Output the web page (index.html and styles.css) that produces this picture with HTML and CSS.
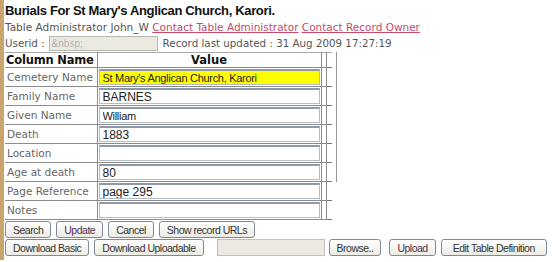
FILE: index.html
```html
<!DOCTYPE html>
<html lang="en">
<head>
    <meta charset="UTF-8">
    <title>Burials For St Mary's Anglican Church, Karori.</title>
    <link rel="stylesheet" href="styles.css">
</head>
<body>
    <h1>Burials For St Mary's Anglican Church, Karori.</h1>
    <div class="admin">Table Administrator John_W <a href="#">Contact Table Administrator</a> <a href="#">Contact Record Owner</a></div>
    <div class="userline">
        Userid : <input class="userid" type="text" placeholder="&amp;nbsp;">
        <span class="updated">Record last updated : 31 Aug 2009 17:27:19</span>
    </div>

    <div class="record">
        <table class="fields">
            <colgroup>
                <col class="c-name">
                <col class="c-value">
                <col class="c-gap">
                <col class="c-tail">
            </colgroup>
            <tr class="head">
                <th class="name">Column Name</th>
                <th class="value">Value</th>
                <td class="gap"></td>
                <td class="tail"></td>
            </tr>
            <tr>
                <td class="name">Cemetery Name</td>
                <td class="value"><input class="field sans highlight" type="text" value="St Mary's Anglican Church, Karori"></td>
                <td class="gap"></td><td class="tail"></td>
            </tr>
            <tr>
                <td class="name">Family Name</td>
                <td class="value"><input class="field" type="text" value="BARNES"></td>
                <td class="gap"></td><td class="tail"></td>
            </tr>
            <tr>
                <td class="name">Given Name</td>
                <td class="value"><input class="field sans" type="text" value="William"></td>
                <td class="gap"></td><td class="tail"></td>
            </tr>
            <tr>
                <td class="name">Death</td>
                <td class="value"><input class="field" type="text" value="1883"></td>
                <td class="gap"></td><td class="tail"></td>
            </tr>
            <tr>
                <td class="name">Location</td>
                <td class="value"><input class="field" type="text" value=""></td>
                <td class="gap"></td><td class="tail"></td>
            </tr>
            <tr>
                <td class="name">Age at death</td>
                <td class="value"><input class="field" type="text" value="80"></td>
                <td class="gap"></td><td class="tail"></td>
            </tr>
            <tr>
                <td class="name">Page Reference</td>
                <td class="value"><input class="field" type="text" value="page 295"></td>
                <td class="gap"></td><td class="tail"></td>
            </tr>
            <tr>
                <td class="name">Notes</td>
                <td class="value"><input class="field" type="text" value=""></td>
                <td class="gap"></td><td class="tail"></td>
            </tr>
        </table>
        <div class="edge"></div>
    </div>

    <div class="buttons">
        <button class="btn">Search</button>
        <button class="btn action">Update</button>
        <button class="btn">Cancel</button>
        <button class="btn">Show record URLs</button>
    </div>
    <div class="buttons">
        <button class="btn">Download Basic</button>
        <button class="btn">Download Uploadable</button>
        <span class="file"><span class="filebox"></span><button class="btn">Browse..</button></span>
        <button class="btn action">Upload</button>
        <button class="btn wide">Edit Table Definition</button>
    </div>
</body>
</html>
```
FILE: styles.css
```css
body {
    margin: 0;
    padding: 2px 0 0 1px;
    border-left: 4px solid #c9a46c; /* left stripe */
    min-height: 258px;
    font-family: 'DejaVu Sans', Verdana, sans-serif;
    font-size: 11px;
    color: #555;
    background: #fff;
}

h1 {
    margin: 0;
    font-family: 'Liberation Sans', Arial, sans-serif;
    font-size: 13px;
    letter-spacing: -0.35px;
    line-height: 17px;
    font-weight: bold;
    color: #111;
}

.admin {
    line-height: 14px;
    margin-top: 1px;
    font-size: 10.5px;
}

.admin a {
    color: #c84a68;
}

.userline {
    display: flex;
    align-items: center;
    height: 18px;
    font-size: 10.3px;
}

.userid {
    width: 109px;
    height: 15px;
    box-sizing: border-box;
    margin: 0 5px 0 4px;
    padding: 0 2px;
    border: 1px solid #b8b8b0;
    background: #ece9e2;
    font-family: 'Liberation Sans', Arial, sans-serif;
    font-size: 10px;
}

.userid::placeholder {
    color: #b0b0b0;
}

.record {
    display: flex;
    align-items: flex-start;
}

.fields {
    border-collapse: collapse;
    table-layout: fixed;
    width: 327px;
}

.c-name { width: 92px; }
.c-value { width: 224px; }
.c-gap { width: 5px; }
.c-tail { width: 6px; }

.fields th,
.fields td {
    padding: 0;
    border: 1px solid #8c8c8c;
    white-space: nowrap;
    overflow: hidden;
}

.fields .name {
    border-left: none;
}

.fields .head th,
.fields .head td {
    height: 14px;
    line-height: 14px;
    font-size: 11.5px;
    font-weight: bold;
    color: #111;
    border-top: 1px solid #aaa;
}

.fields th.name {
    text-align: left;
    padding-left: 1px;
    letter-spacing: -0.2px;
}

.fields td {
    height: 18px;
    line-height: 14px;
}

.fields td.name {
    padding-left: 2px;
    color: #666;
    font-size: 10.5px;
}

.fields td.value {
    padding-left: 1px;
}

.fields .tail {
    border-top: none;
    border-right: none;
    border-bottom: 1px solid #777;
}

.field {
    display: block;
    width: 221px;
    height: 16px;
    box-sizing: border-box;
    margin: 0;
    padding: 0 3px;
    border: 1px solid #b4bcc8;
    border-top: 2px solid #8d99a8;
    background: #fff;
    font-family: 'Liberation Sans', Arial, sans-serif;
    font-size: 12px;
    color: #222;
}

.field.sans {
    font-size: 11px;
    letter-spacing: -0.3px;
}

.field.highlight {
    background: #ffff00;
}

.edge {
    width: 0;
    height: 129px;
    margin-left: 4px;
    border-left: 1px solid #999;
    border-top: 1px solid #aaa;
}

.buttons {
    display: flex;
    align-items: center;
    gap: 5px;
    margin-top: 1px;
}

.buttons:first-of-type {
    margin-top: 0;
}

.btn {
    flex-shrink: 0;
    white-space: nowrap;
    height: 17px;
    padding: 0 7px;
    border: 1px solid #7f8a99;
    border-radius: 3px;
    background: linear-gradient(#ffffff, #ecebe4);
    font-family: 'Liberation Sans', Arial, sans-serif;
    font-size: 10.5px;
    letter-spacing: -0.5px;
    color: #333;
}

.btn.action {
    color: #4e3050;
}

.btn.wide {
    padding: 0 11px;
}

.file {
    display: flex;
    align-items: center;
    gap: 4px;
    margin-left: 8px;
    margin-right: 3px;
}

.filebox {
    width: 108px;
    height: 17px;
    box-sizing: border-box;
    border: 1px solid #c0c0b8;
    background: #ece9e2;
}
```
